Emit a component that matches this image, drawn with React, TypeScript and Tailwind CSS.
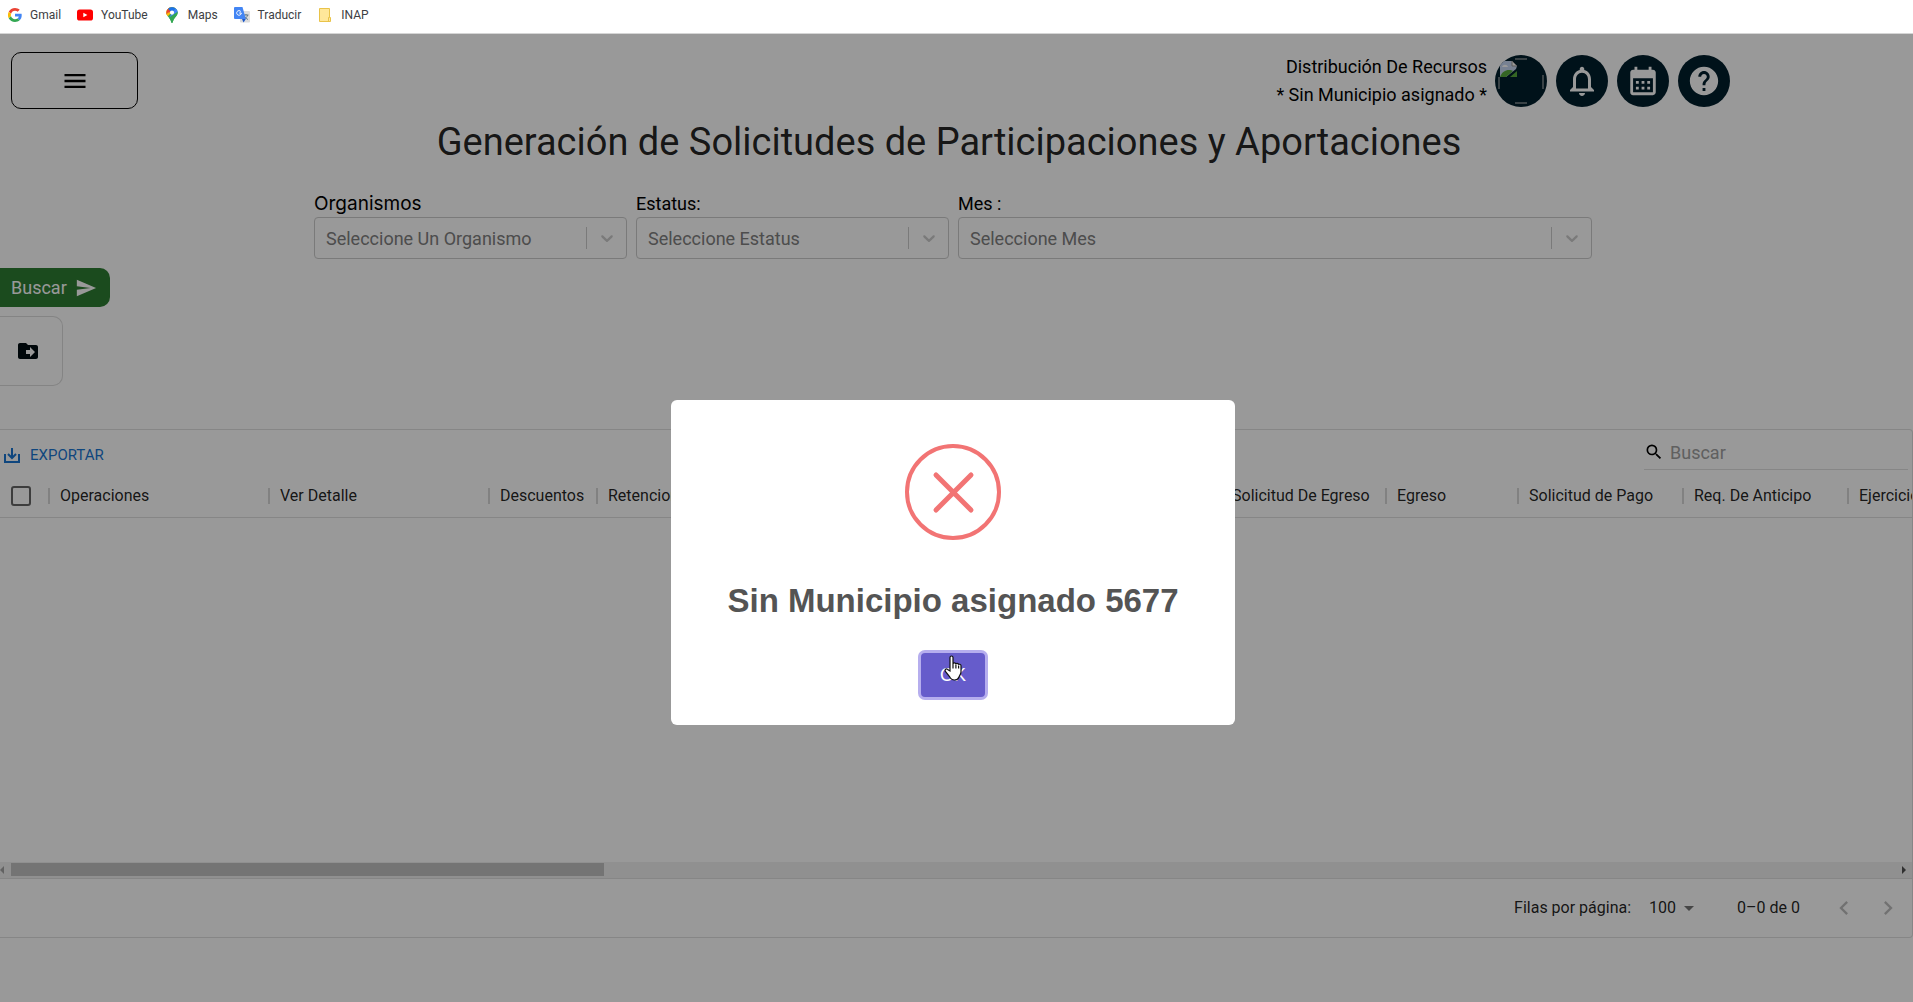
import type { ReactNode } from "react";
import { MdMenu, MdSend, MdDriveFileMove, MdSearch, MdArrowDropDown, MdChevronLeft, MdChevronRight, MdCalendarMonth, MdHelp, MdNotificationsNone } from "react-icons/md";

const columns = [
  { name: "Operaciones", width: "w-[220px]" },
  { name: "Ver Detalle", width: "w-[220px]" },
  { name: "Descuentos", width: "w-[108px]" },
  { name: "Retenciones", width: "w-[150px]" },
  { name: "Importe Total", width: "w-[200px]" },
  { name: "Concepto", width: "w-[274px]" },
  { name: "Solicitud De Egreso", width: "w-[165px]" },
  { name: "Egreso", width: "w-[132px]" },
  { name: "Solicitud de Pago", width: "w-[165px]" },
  { name: "Req. De Anticipo", width: "w-[165px]" },
  { name: "Ejercicio", width: "w-[165px]" },
];

function GoogleIcon() {
  return (
    <svg viewBox="0 0 48 48" className="size-3.5">
      <path fill="#EA4335" d="M24 9.5c3.5 0 6.700 1.200 9.200 3.600l6.900-6.900C35.900 2.400 30.500 0 24 0 14.600 0 6.500 5.400 2.600 13.200l8 6.200C12.400 13.700 17.700 9.500 24 9.500z" />
      <path fill="#4285F4" d="M47 24.600c0-1.600-.2-3.100-.4-4.600H24v9h12.900c-.6 3-2.200 5.500-4.700 7.200l7.700 6C44.400 38 47 31.800 47 24.600z" />
      <path fill="#FBBC05" d="M10.500 28.600A14.500 14.500 0 0 1 10.500 19.400l-8-6.200a24 24 0 0 0 0 21.600z" />
      <path fill="#34A853" d="M24 48c6.500 0 11.900-2.100 15.900-5.800l-7.700-6c-2.200 1.500-4.900 2.300-8.200 2.300-6.300 0-11.600-4.200-13.500-9.900l-8 6.200C6.500 42.600 14.600 48 24 48z" />
    </svg>
  );
}

function YouTubeIcon() {
  return (
    <svg viewBox="0 0 16 16" className="size-4">
      <rect x="0" y="2.500" width="16" height="11" rx="2.600" fill="#f00" />
      <path d="M6.300 5.700v4.600L10.400 8z" fill="#fff" />
    </svg>
  );
}

function MapsIcon() {
  return (
    <svg viewBox="0 0 16 16" className="size-4">
      <defs>
        <clipPath id="pin">
          <path d="M8 0a5.600 5.600 0 0 0-5.600 5.600c0 3.400 2.800 4.600 4.200 7.600.5 1.200.7 2.800 1.400 2.800s.9-1.600 1.400-2.800c1.400-3 4.200-4.200 4.200-7.600A5.600 5.600 0 0 0 8 0z" />
        </clipPath>
      </defs>
      <g clipPath="url(#pin)">
        <rect width="16" height="16" fill="#34A853" />
        <path d="M0 12L13 0H0z" fill="#FBBC04" />
        <path d="M0 0h6l2 5-5 5-3-2z" fill="#FBBC04" />
        <path d="M0 0h5l3 5.600-4 0L2 8z" fill="#EA4335" />
        <path d="M5 0L16 0v4L8 5.600 4 2z" fill="#1A73E8" />
        <path d="M16 2.500L11 2 8 5.600 5 11l6-1z" fill="#4285F4" />
        <path d="M0 14L11 6.500 16 3v13H0z" fill="#34A853" />
      </g>
      <circle cx="8" cy="5.600" r="2.100" fill="#fff" />
    </svg>
  );
}

function TranslateIcon() {
  return (
    <svg viewBox="0 0 16 16" className="size-4">
      <rect x="6" y="4" width="10" height="11.500" rx="1" fill="#dcdcdc" />
      <path d="M9.500 8h5M12 7v1m1.600 0c-.4 2-2 3.600-3.600 4.300m.4-3.300c.6 1.500 2 2.800 3.600 3.500" stroke="#607988" fill="none" />
      <path d="M1 0h7.500l3.300 12H1a1 1 0 0 1-1-1V1a1 1 0 0 1 1-1z" fill="#4285F4" />
      <path d="M11.800 12H8l1.500 3.500z" fill="#1a56c8" />
      <path d="M7.300 6H5.200m1.600-1.500A2.300 2.300 0 1 0 7.300 6" stroke="#fff" fill="none" />
    </svg>
  );
}

function FolderIcon() {
  return (
    <svg viewBox="0 0 16 16" className="size-4">
      <path d="M2.500 1.500h10v9h1v4h-11z" fill="#ffe79a" stroke="#e9c349" />
      <path d="M11.500 14v-3.500h1" fill="none" stroke="#e9c349" />
    </svg>
  );
}

function Bookmark({ icon, label }: { icon: ReactNode; label: string }) {
  return (
    <a href="#" className="flex items-center gap-2">
      {icon}
      <span>{label}</span>
    </a>
  );
}

function SelectField({ id, label, placeholder, labelClass }: { id: string; label: string; placeholder: string; labelClass?: string }) {
  return (
    <div className="min-w-0">
      <label htmlFor={id} className={labelClass ?? "block text-[18px] leading-6"}>
        {label}
      </label>
      <div className="relative mt-px">
        <select
          id={id}
          className="h-[42px] w-full appearance-none rounded-[4px] border border-[#ccc] bg-white pr-14 pl-[11px] text-[18px] text-[#808080]"
        >
          <option>{placeholder}</option>
        </select>
        <div className="pointer-events-none absolute inset-y-0 right-0 flex items-center">
          <span className="h-[22px] w-px bg-[#ccc]" />
          <svg viewBox="0 0 20 20" className="mx-[10px] size-5" fill="#ccc">
            <path d="M4.516 7.548c0.436-0.446 1.043-0.481 1.576 0l3.908 3.747 3.908-3.747c0.533-0.481 1.141-0.446 1.574 0 0.436 0.445 0.408 1.197 0 1.615-0.406 0.418-4.695 4.502-4.695 4.502-0.217 0.223-0.502 0.335-0.787 0.335s-0.570-0.112-0.789-0.335c0 0-4.287-4.084-4.695-4.502s-0.436-1.170 0-1.615z" />
          </svg>
        </div>
      </div>
    </div>
  );
}

function RoundButton({ label, children }: { label: string; children: ReactNode }) {
  return (
    <button aria-label={label} className="flex size-[52px] items-center justify-center overflow-hidden rounded-full bg-[#001e2c] text-white">
      {children}
    </button>
  );
}

function BrokenImage() {
  return (
    <svg viewBox="0 0 52 52" className="size-[52px]">
      <path d="M4 22v12M48 20v14M20 4h12M20 48h12" stroke="#c0c0c0" fill="none" />
      <path d="M5 22V6h12l5 5-1 3-10 8z" fill="#c6d8f4" />
      <path d="M17 6v5h5z" fill="#fff" stroke="#9a9a9a" />
      <path d="M5 22c2-5 5-7 9-7 2 0 3 0 4 1l-7 6z" fill="#58a83c" />
      <path d="M15 22h7v-6z" fill="#58a83c" />
      <path d="M7 12c1-3 5-3 6 0z" fill="#fff" />
    </svg>
  );
}

function HandCursor() {
  return (
    <svg viewBox="0 0 18 26" className="pointer-events-none absolute top-[2px] left-[23px] h-[26px] w-[18px]">
      <path
        d="M6 16V2.500a1.500 1.500 0 0 1 3 0V9c0-1.500 2.700-1.500 2.900.3 0-1.300 2.500-1.200 2.700.5.2-1 2.400-.7 2.400 1V17c0 2-1.500 3.500-2 5-.6 1.700-2.500 3-4.500 3-2.500 0-4-1.500-5-3.500L1.400 16.500C.4 14.600 2.300 13.300 3.600 14.400z"
        fill="#fff"
        stroke="#111"
        strokeWidth="1.200"
      />
      <path d="M9 9v4.500M11.900 9.500v4M14.600 10.500v3" stroke="#111" strokeWidth="1.200" />
    </svg>
  );
}

export default function App() {
  return (
    <div className="flex min-h-screen flex-col overflow-x-hidden bg-white font-['Roboto',sans-serif] text-black">
      <nav className="flex h-[34px] shrink-0 items-center border-b border-[#d5d5d5] px-2 pb-1 text-[12px] text-[#3c4043]">
        <div className="flex items-center gap-4">
          <Bookmark icon={<GoogleIcon />} label="Gmail" />
          <Bookmark icon={<YouTubeIcon />} label="YouTube" />
          <Bookmark icon={<MapsIcon />} label="Maps" />
          <Bookmark icon={<TranslateIcon />} label="Traducir" />
          <Bookmark icon={<FolderIcon />} label="INAP" />
        </div>
      </nav>

      <div className="relative flex-1">
        <header className="flex items-start justify-between pt-[18px] pr-[183px] pl-[11px]">
          <button aria-label="Menú" className="flex h-[57px] w-[127px] items-center justify-center rounded-[10px] border border-black">
            <MdMenu className="size-7" />
          </button>
          <div className="flex gap-2">
            <div className="pt-px text-right text-[18px] leading-7">
              <p>Distribución De Recursos</p>
              <p>* Sin Municipio asignado *</p>
            </div>
            <div className="flex gap-[9px] pt-[3px]">
              <RoundButton label="Perfil"><BrokenImage /></RoundButton>
              <RoundButton label="Notificaciones"><MdNotificationsNone className="size-9" /></RoundButton>
              <RoundButton label="Calendario"><MdCalendarMonth className="size-[34px]" /></RoundButton>
              <RoundButton label="Ayuda"><MdHelp className="size-[34px]" /></RoundButton>
            </div>
          </div>
        </header>

        <h1 className="mt-2 mr-[15px] text-center text-[38px] leading-[50px] text-black/87">
          Generación de Solicitudes de Participaciones y Aportaciones
        </h1>

        <div className="mt-[25px] ml-[314px] grid w-[1278px] max-w-full grid-cols-[313px_313px_1fr] gap-[9px]">
          <SelectField id="organismos" label="Organismos" placeholder="Seleccione Un Organismo" labelClass="block font-['Inter'] text-[19px] leading-6" />
          <SelectField id="estatus" label="Estatus:" placeholder="Seleccione Estatus" />
          <SelectField id="mes" label="Mes :" placeholder="Seleccione Mes" />
        </div>

        <button className="mt-[9px] flex h-[39px] w-[110px] items-center gap-2 rounded-r-[10px] bg-[#2e7d32] pl-[11px] text-[18px] text-white">
          Buscar
          <MdSend className="size-[22px]" />
        </button>
        <button aria-label="Exportar carpeta" className="mt-[9px] flex h-[70px] w-[63px] items-center justify-start rounded-r-[10px] border border-l-0 border-[#dcdcdc] pl-4 text-[#000d12]">
          <MdDriveFileMove className="size-6" />
        </button>

        <main className="mt-[43px] overflow-hidden rounded-r-[4px] border border-l-0 border-[#e0e0e0]">
          <div className="flex h-10 items-start justify-between pr-1 pl-1">
            <button className="mt-[13px] flex items-center gap-[10px] text-[15px] leading-6 text-[#1976d2]">
              <svg viewBox="0 0 16 16" className="size-4" fill="none" stroke="currentColor" strokeWidth="2">
                <path d="M1 7v8h14V7M8 1v9M4 7l4 4 4-4" />
              </svg>
              EXPORTAR
            </button>
            <label className="flex h-10 w-[264px] items-center gap-[6px] border-b border-[#e0e0e0] pt-[5px]">
              <MdSearch className="size-5" />
              <input placeholder="Buscar" aria-label="Buscar" className="w-0 flex-1 text-[18px] placeholder:text-[#a0a0a0]" />
            </label>
          </div>

          <table className="w-max table-fixed border-b border-[#e0e0e0] text-left text-[16px] text-black/87">
            <thead>
              <tr className="h-[47px]">
                <th className="w-[48px] pt-[6px] pl-[11px]">
                  <input type="checkbox" aria-label="Seleccionar todo" className="block size-5 appearance-none rounded-[3px] border-2 border-[#666]" />
                </th>
                {columns.map((column) => (
                  <th key={column.name} className={"p-0 pt-[6px] font-normal whitespace-nowrap " + column.width}>
                    <div className={"flex items-center gap-[10px] " + column.width}>
                      <span className="h-4 w-[2px] bg-[#d8d8d8]" />
                      {column.name}
                    </div>
                  </th>
                ))}
              </tr>
            </thead>
          </table>

          <div className="h-[344px]" />
          <div className="flex h-4 items-center justify-between bg-[#f1f1f1]">
            <svg viewBox="0 0 11 16" className="h-4 w-[11px] shrink-0"><path d="M4 4v8L0 8z" fill="#a3a3a3" /></svg>
            <div className="mr-auto h-[13px] w-[31%] bg-[#c1c1c1]" />
            <svg viewBox="0 0 10 16" className="h-4 w-[10px] shrink-0"><path d="M0 4v8l4-4z" fill="#505050" /></svg>
          </div>

          <footer className="flex h-[59px] items-center justify-end border-t border-[#e0e0e0] pr-[10px] text-[16px] text-black/87">
            <label htmlFor="filas">Filas por página:</label>
            <div className="relative ml-[18px] w-[88px]">
              <select id="filas" className="w-12 appearance-none bg-white">
                <option>100</option>
              </select>
              <MdArrowDropDown className="pointer-events-none absolute top-0 left-[28px] size-6 text-black/54" />
            </div>
            <p>0–0 de 0</p>
            <button aria-label="Página anterior" disabled className="ml-[30px] text-black/26"><MdChevronLeft className="size-7" /></button>
            <button aria-label="Página siguiente" disabled className="ml-4 text-black/26"><MdChevronRight className="size-7" /></button>
          </footer>
        </main>

        <div className="absolute inset-0 bg-black/40" />
      </div>

      <div className="pointer-events-none fixed inset-x-0 top-[400px] flex justify-center pr-[7px]">
        <div role="dialog" aria-modal="true" aria-labelledby="dialog-title" className="pointer-events-auto flex h-[325px] w-[564px] flex-col items-center rounded-[6px] bg-white pt-11 font-['Liberation_Sans',sans-serif]">
          <svg viewBox="0 0 96 96" className="size-24" fill="none" stroke="#f27474" strokeLinecap="round">
            <circle cx="48" cy="48" r="46" strokeWidth="4" />
            <path d="M31 31l35 35M66 31L31 66" strokeWidth="5" />
          </svg>
          <h2 id="dialog-title" className="mt-10 text-[33px] leading-[42px] font-bold text-[#545454]">
            Sin Municipio asignado 5677
          </h2>
          <button className="relative mt-[31px] h-11 w-16 rounded-[4px] bg-[#665ccb] text-[18px] text-white ring-3 ring-[#b6aeee]">
            OK
            <HandCursor />
          </button>
        </div>
      </div>
    </div>
  );
}
